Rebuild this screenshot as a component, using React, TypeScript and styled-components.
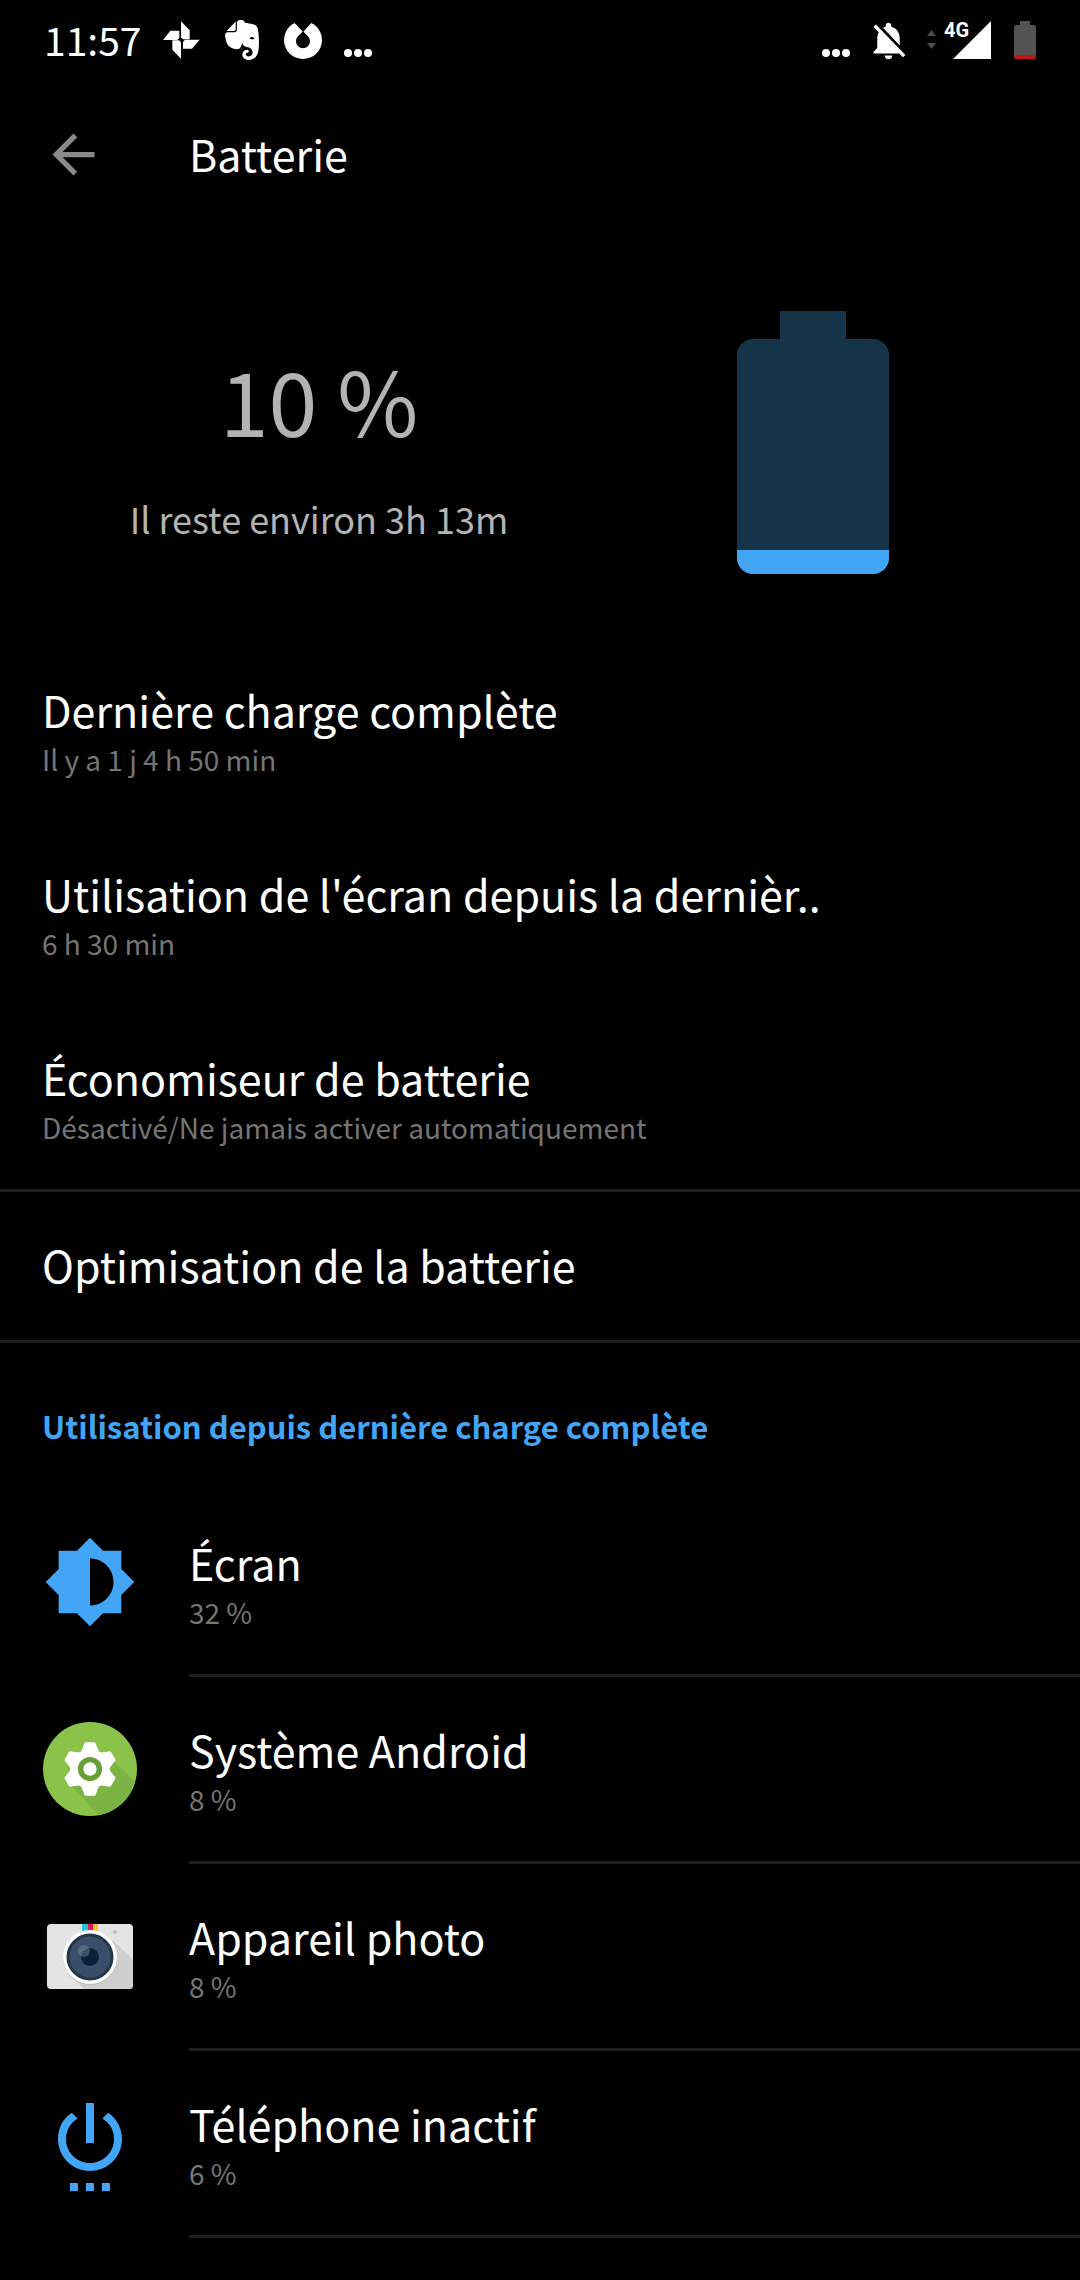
import React from "react";
import styled, { createGlobalStyle } from "styled-components";
import { MdArrowBack, MdBrightnessMedium, MdNotificationsOff, MdSettingsPower } from "react-icons/md";
import { SiEvernote } from "react-icons/si";

const accent = "#42a5f5";

const GlobalStyle = createGlobalStyle`
  *, *::before, *::after { box-sizing: border-box; }
  body {
    margin: 0;
    background: #000;
    color: #fff;
    font-family: "Noto Sans CJK JP", "Noto Sans", sans-serif;
  }
  h1, h2, p, ul { margin: 0; padding: 0; font-weight: 400; }
  svg { display: block; flex: none; }
`;

const Screen = styled.div`
  display: flex;
  flex-direction: column;
`;

const StatusBar = styled.header`
  display: flex;
  justify-content: space-between;
  align-items: center;
  height: 80px;
  padding: 0 44px;
`;

const StatusGroup = styled.div<{ $gap: number }>`
  display: flex;
  align-items: center;
  gap: ${(p) => p.$gap}px;
`;

const Clock = styled.time`
  padding-bottom: 3px;
  font-size: 39px;
  line-height: 48px;
`;

const Signal = styled.div`
  display: flex;
  align-items: flex-start;
`;

const Network = styled.span`
  position: absolute;
  font: 700 20px/18px "Liberation Sans Narrow", "Roboto", sans-serif;
`;

const AppBar = styled.div`
  display: flex;
  align-items: center;
  gap: 84px;
  height: 148px;
  padding: 0 42px;
`;

const BackButton = styled.button`
  display: flex;
  padding: 0;
  border: 0;
  background: none;
  color: #8a8a8a;
  cursor: pointer;
`;

const Title = styled.h1`
  padding-bottom: 3px;
  font-size: 43px;
  line-height: 60px;
`;

const Summary = styled.section`
  display: grid;
  grid-template-columns: 1fr 1fr;
  justify-items: center;
  padding: 83px 20px 63px 72px;
`;

const Level = styled.div`
  display: flex;
  flex-direction: column;
  align-items: center;
  gap: 29px;
  padding-top: 24px;
  color: #b3b3b3;
`;

const Percent = styled.p`
  font-size: 88px;
  line-height: 128px;
`;

const Remaining = styled.p`
  font-size: 36px;
  line-height: 52px;
`;

const List = styled.ul`
  list-style: none;
`;

const Item = styled.li<{ $divider?: boolean }>`
  border-bottom: ${(p) => (p.$divider ? "3px solid #1f1f1f" : "0")};
`;

const Row = styled.button<{ $compact?: boolean }>`
  display: flex;
  flex-direction: column;
  justify-content: center;
  width: 100%;
  height: ${(p) => (p.$compact ? 148 : 184)}px;
  padding: ${(p) => (p.$compact ? "0 42px 4px" : "0 42px")};
  border: 0;
  background: none;
  color: inherit;
  font: inherit;
  text-align: left;
  cursor: pointer;
`;

const Name = styled.span`
  font-size: 43px;
  line-height: 60px;
`;

const Detail = styled.span`
  color: #757575;
  font-size: 28px;
  line-height: 40px;
`;

const SectionTitle = styled.h2`
  padding: 59px 42px 40px;
  color: ${accent};
  font-size: 31px;
  line-height: 48px;
  font-weight: 700;
`;

const AppRow = styled.button`
  display: flex;
  gap: 51px;
  width: 100%;
  padding: 0 0 0 42px;
  border: 0;
  background: none;
  color: inherit;
  font: inherit;
  text-align: left;
  cursor: pointer;
`;

const AppIcon = styled.span`
  display: flex;
  align-items: center;
  justify-content: center;
  width: 96px;
  height: 184px;
  color: ${accent};
`;

const AppText = styled.span`
  display: flex;
  flex: 1;
  flex-direction: column;
  justify-content: center;
  border-bottom: 3px solid #1f1f1f;
  height: 187px;
`;

const Dots = () => (
  <svg width="28" height="38" viewBox="0 0 28 38" fill="#fff" aria-hidden="true">
    <circle cx="4" cy="32" r="4" />
    <circle cx="14" cy="32" r="4" />
    <circle cx="24" cy="32" r="4" />
  </svg>
);

const Pinwheel = () => (
  <svg width="37" height="38" viewBox="0 0 111 114" fill="#fff" aria-hidden="true">
    <path d="M54 1 L80 28 V55 H60 L54 49Z" />
    <path d="M0 57 L22 29 H49 V51 L43 57Z" />
    <path d="M110 56 L87 83 H60 V62 L66 56Z" />
    <path d="M54 113 L28 86 V58 H48 L54 64Z" />
  </svg>
);

const Ring = () => (
  <svg width="38" height="38" viewBox="0 0 114 114" aria-hidden="true">
    <circle cx="57" cy="57" r="57" fill="#fff" />
    <path d="M33 7 L57 33 L81 7 V-2 H33Z" />
    <path d="M57 31 C64 40 78 46 78 61 A21 21 0 0 1 36 61 C36 46 50 40 57 31Z" />
  </svg>
);

const DataArrows = () => (
  <svg width="9" height="20" viewBox="0 0 9 20" fill="#4d4d4d" aria-hidden="true">
    <path d="M4.500 0 L9 6 H0Z M0 13 H9 L4.500 19Z" />
  </svg>
);

const SignalBars = () => (
  <svg width="47" height="38" viewBox="0 0 47 38" fill="#fff" aria-hidden="true">
    <path d="M47 0 V38 H9Z" />
  </svg>
);

const StatusBattery = () => (
  <svg width="22" height="38" viewBox="0 0 22 38" aria-hidden="true">
    <path d="M6 0 H16 V4 H20 Q22 4 22 6 V34 H0 V6 Q0 4 2 4 H6Z" fill="#525252" />
    <path d="M0 34 H22 V36 Q22 38 20 38 H2 Q0 38 0 36Z" fill="#c81414" />
  </svg>
);

const BatteryGauge = ({ level }: { level: number }) => {
  const fill = Math.round(235 * level);
  return (
    <svg width="152" height="263" viewBox="0 0 152 263" role="img" aria-label="Niveau de la batterie">
      <clipPath id="gauge">
        <rect y="28" width="152" height="235" rx="16" />
      </clipPath>
      <rect x="43" width="66" height="30" fill="#153349" />
      <g clipPath="url(#gauge)">
        <rect y="28" width="152" height="235" fill="#153349" />
        <rect y={263 - fill} width="152" height={fill} fill={accent} />
      </g>
    </svg>
  );
};

const AndroidIcon = () => (
  <svg width="94" height="94" viewBox="0 0 95 95" aria-hidden="true">
    <clipPath id="disc">
      <circle cx="47.500" cy="47.500" r="47.500" />
    </clipPath>
    <circle cx="47.500" cy="47.500" r="47.500" fill="#8bc34a" />
    <path d="M28 64 L64 32 L110 78 L80 120Z" fill="#7cb342" clipPath="url(#disc)" />
    <g transform="translate(47.500 47.500)" fill="#fff">
      <circle r="20" />
      {[0, 60, 120, 180, 240, 300].map((a) => (
        <path key={a} transform={`rotate(${a})`} d="M-10 -15 L-6 -25 Q-6 -27 -4 -27 H4 Q6 -27 6 -25 L10 -15Z" />
      ))}
      <circle r="9.500" fill="#fff" stroke="#689f38" strokeWidth="5.500" />
    </g>
  </svg>
);

const CameraIcon = () => (
  <svg width="86" height="65" viewBox="0 0 86 65" aria-hidden="true">
    <clipPath id="body">
      <rect width="86" height="65" rx="4" />
    </clipPath>
    <g clipPath="url(#body)">
      <rect width="86" height="65" fill="#e4e4e4" />
      <path d="M66 16 L86 36 V65 H37 L24 52Z" fill="#cdcfcf" />
      <rect x="35" width="6" height="10" fill="#26c6da" />
      <rect x="41" width="5" height="10" fill="#d81b60" />
      <rect x="46" width="5" height="10" fill="#fbc02d" />
    </g>
    <circle cx="68" cy="8" r="2" fill="#bdbdbd" />
    <circle cx="43" cy="34" r="27" fill="#b9bbbb" />
    <circle cx="43" cy="33" r="27" fill="#fff" />
    <circle cx="43" cy="33" r="22" fill="#3a4e6b" stroke="#243746" strokeWidth="3" />
    <circle cx="43" cy="33" r="9" fill="#0a2038" />
    <circle cx="37" cy="27" r="6" fill="#8495ab" opacity="0.4" />
  </svg>
);

const settings = [
  { name: "Dernière charge complète", detail: "Il y a 1 j 4 h 50 min" },
  { name: "Utilisation de l'écran depuis la dernièr..", detail: "6 h 30 min" },
  { name: "Économiseur de batterie", detail: "Désactivé/Ne jamais activer automatiquement", divider: true },
];

const usage = [
  { name: "Écran", detail: "32 %", icon: <MdBrightnessMedium size={94} /> },
  { name: "Système Android", detail: "8 %", icon: <AndroidIcon /> },
  { name: "Appareil photo", detail: "8 %", icon: <CameraIcon /> },
  { name: "Téléphone inactif", detail: "6 %", icon: <MdSettingsPower size={96} /> },
];

export default function App() {
  return (
    <Screen lang="fr">
      <GlobalStyle />
      <StatusBar>
        <StatusGroup $gap={22}>
          <Clock>11:57</Clock>
          <Pinwheel />
          <SiEvernote size={40} />
          <Ring />
          <Dots />
        </StatusGroup>
        <StatusGroup $gap={23}>
          <StatusGroup $gap={8}>
            <StatusGroup $gap={16}>
              <Dots />
              <MdNotificationsOff size={45} />
              <DataArrows />
            </StatusGroup>
            <Signal>
              <Network>4G</Network>
              <SignalBars />
            </Signal>
          </StatusGroup>
          <StatusBattery />
        </StatusGroup>
      </StatusBar>
      <AppBar>
        <BackButton aria-label="Retour">
          <MdArrowBack size={63} />
        </BackButton>
        <Title>Batterie</Title>
      </AppBar>
      <main>
        <Summary>
          <Level>
            <Percent>10 %</Percent>
            <Remaining>Il reste environ 3h 13m</Remaining>
          </Level>
          <BatteryGauge level={0.1} />
        </Summary>
        <List>
          {settings.map((s) => (
            <Item key={s.name} $divider={s.divider}>
              <Row>
                <Name>{s.name}</Name>
                <Detail>{s.detail}</Detail>
              </Row>
            </Item>
          ))}
          <Item $divider>
            <Row $compact>
              <Name>Optimisation de la batterie</Name>
            </Row>
          </Item>
        </List>
        <SectionTitle>Utilisation depuis dernière charge complète</SectionTitle>
        <List>
          {usage.map((u) => (
            <Item key={u.name}>
              <AppRow>
                <AppIcon>{u.icon}</AppIcon>
                <AppText>
                  <Name>{u.name}</Name>
                  <Detail>{u.detail}</Detail>
                </AppText>
              </AppRow>
            </Item>
          ))}
        </List>
      </main>
    </Screen>
  );
}
